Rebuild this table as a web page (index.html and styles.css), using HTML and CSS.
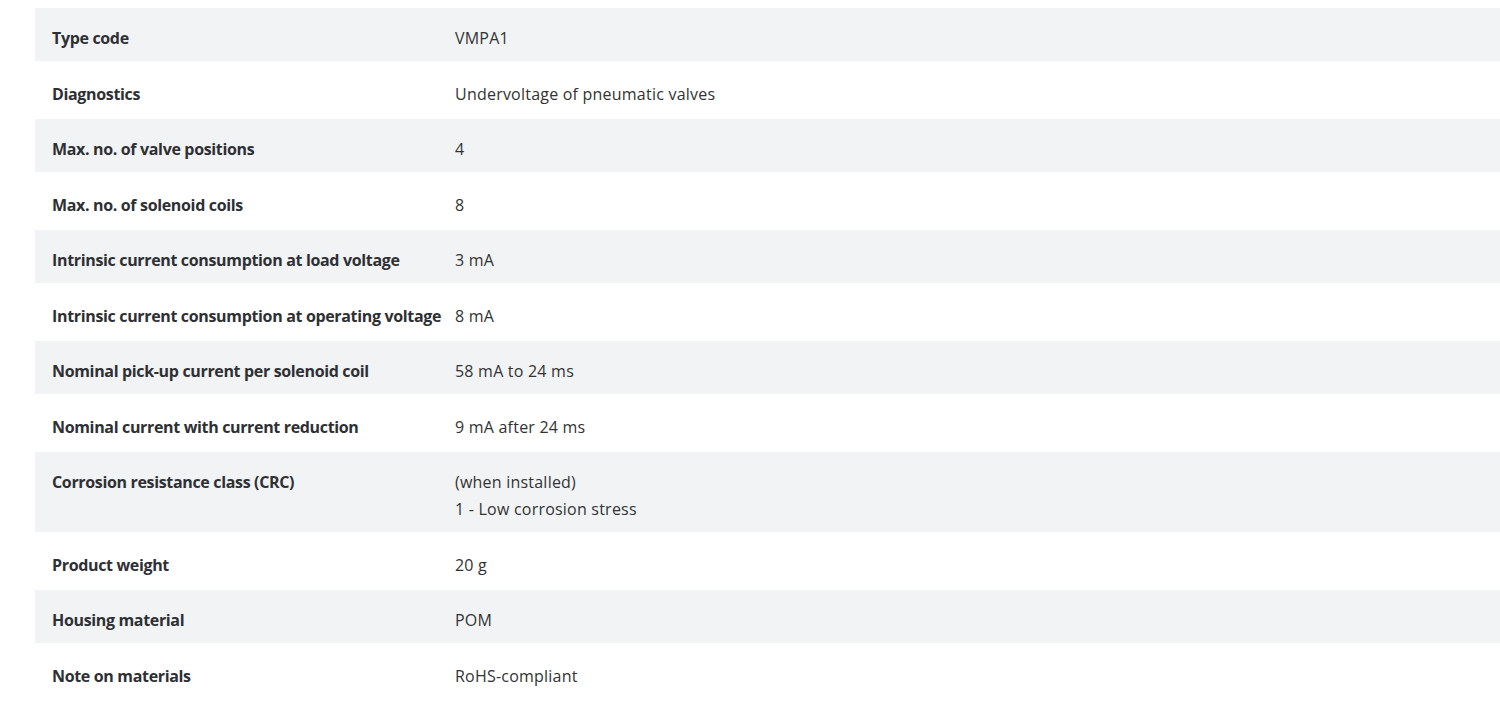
FILE: index.html
```html
<!DOCTYPE html>
<html lang="en">
<head>
<meta charset="utf-8">
<title>Technical data</title>
<link rel="stylesheet" href="styles.css">
</head>
<body>
<div class="specs">
  <div class="row shade"><div class="label">Type code</div><div class="value">VMPA1</div></div>
  <div class="row"><div class="label">Diagnostics</div><div class="value">Undervoltage of pneumatic valves</div></div>
  <div class="row shade"><div class="label">Max. no. of valve positions</div><div class="value">4</div></div>
  <div class="row"><div class="label">Max. no. of solenoid coils</div><div class="value">8</div></div>
  <div class="row shade"><div class="label">Intrinsic current consumption at load voltage</div><div class="value">3 mA</div></div>
  <div class="row"><div class="label">Intrinsic current consumption at operating voltage</div><div class="value">8 mA</div></div>
  <div class="row shade"><div class="label">Nominal pick-up current per solenoid coil</div><div class="value">58 mA to 24 ms</div></div>
  <div class="row"><div class="label">Nominal current with current reduction</div><div class="value">9 mA after 24 ms</div></div>
  <div class="row shade"><div class="label">Corrosion resistance class (CRC)</div><div class="value">(when installed)<br>1 - Low corrosion stress</div></div>
  <div class="row"><div class="label">Product weight</div><div class="value">20 g</div></div>
  <div class="row shade"><div class="label">Housing material</div><div class="value">POM</div></div>
  <div class="row"><div class="label">Note on materials</div><div class="value">RoHS-compliant</div></div>
</div>
</body>
</html>
```
FILE: styles.css
```css
html, body {
  margin: 0;
  padding: 0;
  background: #ffffff;
}
body {
  font-family: "Open Sans", "Noto Sans", sans-serif;
  font-size: 16px;
  color: #333333;
}
.specs {
  margin: 8px 0 0 35px;
  display: flex;
  flex-direction: column;
}
.row {
  display: grid;
  grid-template-columns: 403px 1fr;
  line-height: 27px;
  padding: 20px 17px 11px;
}
.row.shade {
  background: #f2f3f5;
  padding: 17px 17px 9px;
}
.label {
  font-weight: 700;
  color: #2e3033;
  letter-spacing: -0.34px;
  white-space: nowrap;
}
.value {
  font-weight: 400;
  letter-spacing: 0.22px;
}
```
